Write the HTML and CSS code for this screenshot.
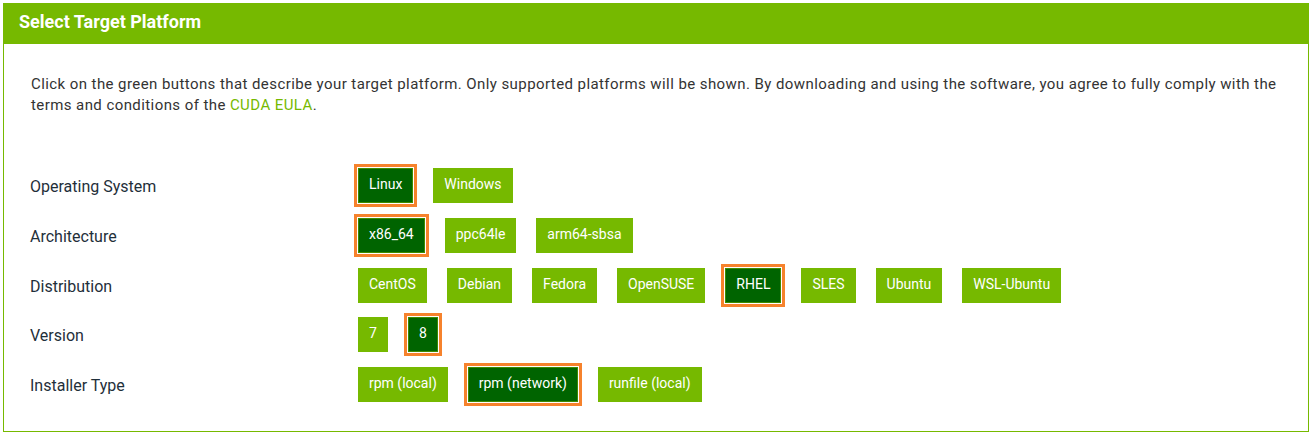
FILE: index.html
```html
<!DOCTYPE html>
<html>
<head>
<meta charset="utf-8">
<link rel="stylesheet" href="styles.css">
</head>
<body>
<div class="panel">
  <div class="panel-head">Select Target Platform</div>
  <div class="panel-body">
    <p class="intro">Click on the green buttons that describe your target platform. Only supported platforms will be shown. By downloading and using the software, you agree to fully comply with the terms and conditions of the <a class="link" href="#">CUDA EULA</a>.</p>
    <div class="rows">
      <div class="row">
        <div class="label">Operating System</div>
        <div class="btns">
          <span class="btn selected">Linux</span>
          <span class="btn">Windows</span>
        </div>
      </div>
      <div class="row">
        <div class="label">Architecture</div>
        <div class="btns">
          <span class="btn selected">x86_64</span>
          <span class="btn">ppc64le</span>
          <span class="btn">arm64-sbsa</span>
        </div>
      </div>
      <div class="row">
        <div class="label">Distribution</div>
        <div class="btns">
          <span class="btn">CentOS</span>
          <span class="btn">Debian</span>
          <span class="btn">Fedora</span>
          <span class="btn">OpenSUSE</span>
          <span class="btn selected">RHEL</span>
          <span class="btn">SLES</span>
          <span class="btn">Ubuntu</span>
          <span class="btn">WSL-Ubuntu</span>
        </div>
      </div>
      <div class="row">
        <div class="label">Version</div>
        <div class="btns">
          <span class="btn">7</span>
          <span class="btn selected">8</span>
        </div>
      </div>
      <div class="row">
        <div class="label">Installer Type</div>
        <div class="btns">
          <span class="btn">rpm (local)</span>
          <span class="btn selected">rpm (network)</span>
          <span class="btn">runfile (local)</span>
        </div>
      </div>
    </div>
  </div>
</div>
</body>
</html>
```

FILE: styles.css
```css
html, body {
  margin: 0;
  padding: 0;
  background: #fff;
}
body {
  padding: 3px;
  font-family: Roboto, "Liberation Sans", sans-serif;
  color: #333;
}
.panel {
  border: 1px solid #76b900;
  border-top: none;
  height: 429px;
  box-sizing: border-box;
}
.panel-head {
  background: #76b900;
  color: #fff;
  font-weight: bold;
  font-size: 18px;
  height: 41px;
  line-height: 38px;
  padding-left: 16px;
  margin: 0 -1px;
}
.panel-body {
  padding: 0 22px 0 26px;
}
.intro {
  margin: 30px 0 0 1px;
  font-size: 15px;
  line-height: 21px;
  letter-spacing: 0.42px;
}
.link {
  color: #76b900;
  text-decoration: none;
}
.rows {
  margin-top: 52px;
  display: flex;
  flex-direction: column;
  gap: 16.75px;
}
.row {
  display: grid;
  grid-template-columns: 328px 1fr;
  height: 33px;
}
.label {
  font-size: 16px;
  line-height: 33px;
  padding-top: 2px;
  color: #1f2f3a;
}
.btns {
  display: flex;
  gap: 20px;
}
.btn {
  display: inline-block;
  background: #76b900;
  border: 1px solid #76b900;
  color: #fff;
  font-size: 14px;
  line-height: 31px;
  padding: 0 10px;
}
.btn.selected {
  background: #006400;
  border-color: #3f8a00;
  box-shadow: 0 0 0 1px #fff, 0 0 0 4px #f6822c;
}
```
